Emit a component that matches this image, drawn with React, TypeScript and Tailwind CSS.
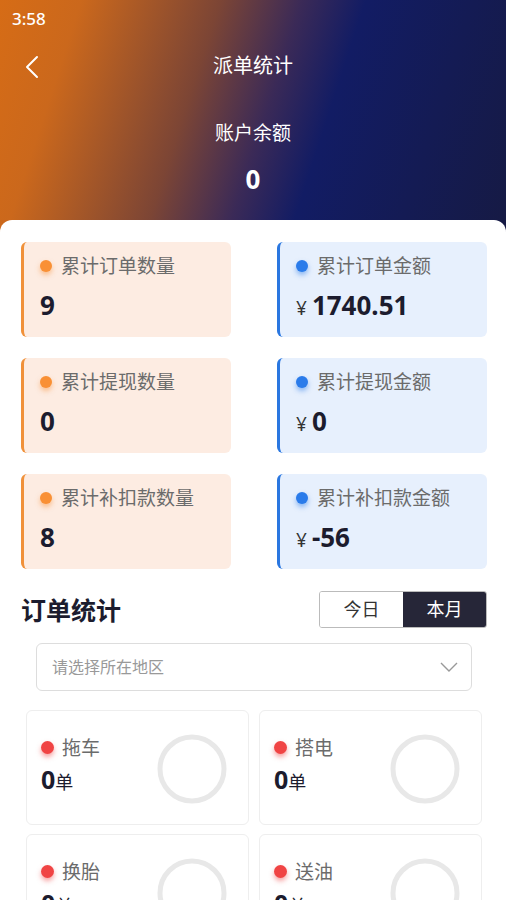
import React from 'react';

const font = { fontFamily: '"Noto Sans", "Noto Sans CJK SC", sans-serif' };

interface StatProps {
  label: string;
  value: string;
  money?: boolean;
}

const StatCard: React.FC<StatProps & { tone: 'orange' | 'blue' }> = ({ label, value, money, tone }) => {
  const orange = tone === 'orange';
  return (
    <div
      className={`h-[95px] rounded-md border-l-[3px] pl-[16px] pt-[12px] ${
        orange ? 'border-[#f0913a] bg-[#fdece2]' : 'border-[#2a77e0] bg-[#e7f0fd]'
      }`}
    >
      <div className="flex items-center gap-[9px]">
        <span
          className={`h-[12px] w-[12px] rounded-full ${
            orange ? 'bg-[#f99035] shadow-[0_3px_5px_rgba(249,144,53,0.5)]' : 'bg-[#2a7bea] shadow-[0_3px_5px_rgba(42,123,234,0.5)]'
          }`}
        />
        <span className="text-[19px] leading-[24px] text-[#6b6b6b]">{label}</span>
      </div>
      <div className="mt-[13px] flex items-baseline text-[#1c1c2e]">
        {money && <span className="mr-[5px] text-[19px] text-[#333]">¥</span>}
        <span className="text-[26px] font-bold leading-[28px]">{value}</span>
      </div>
    </div>
  );
};

const OrderCard: React.FC<{ label: string }> = ({ label }) => (
  <div className="flex h-[115px] items-center justify-between rounded-md border border-[#eeeeee] bg-white pl-[14px] pr-[20px]">
    <div className="-mt-[4px]">
      <div className="flex items-center gap-[8px]">
        <span className="h-[13px] w-[13px] rounded-full bg-[#f04444] shadow-[0_3px_5px_rgba(240,68,68,0.5)]" />
        <span className="text-[19px] leading-[24px] text-[#6b6b6b]">{label}</span>
      </div>
      <div className="mt-[5px] flex items-baseline text-[#1c1c2e]">
        <span className="text-[25px] font-bold leading-[28px]">0</span>
        <span className="text-[18px]">单</span>
      </div>
    </div>
    <svg width="72" height="72" viewBox="0 0 72 72" className="mt-[2px]">
      <circle cx="36" cy="36" r="32" fill="none" stroke="#e8e8e8" strokeWidth="5" />
    </svg>
  </div>
);

export default function App() {
  const stats: [StatProps, StatProps][] = [
    [
      { label: '累计订单数量', value: '9' },
      { label: '累计订单金额', value: '1740.51', money: true },
    ],
    [
      { label: '累计提现数量', value: '0' },
      { label: '累计提现金额', value: '0', money: true },
    ],
    [
      { label: '累计补扣款数量', value: '8' },
      { label: '累计补扣款金额', value: '-56', money: true },
    ],
  ];

  return (
    <div className="h-[900px] w-[506px] overflow-hidden bg-white" style={font}>
      {/* Header */}
      <div className="h-[232px] bg-[linear-gradient(108deg,#d66c16_0%,#cb681c_14%,#7c4535_38%,#3b2a57_52%,#121c64_63%,#161a44_100%)] text-white">
        <div className="px-[12px] pt-[8px] text-[17px] font-medium leading-[22px]">3:58</div>
        <div className="relative mt-[14px] flex h-[44px] items-center justify-center">
          <svg className="absolute left-[24px] top-[11px]" width="16" height="24" viewBox="0 0 16 24">
            <path d="M13 2 L3 12 L13 22" fill="none" stroke="white" strokeWidth="2" strokeLinecap="round" strokeLinejoin="round" />
          </svg>
          <span className="text-[20px] leading-[28px]">派单统计</span>
        </div>
        <div className="mt-[33px] text-center text-[19px] leading-[24px]">账户余额</div>
        <div className="mt-[20px] text-center text-[26px] font-bold leading-[28px]">0</div>
      </div>

      {/* Body */}
      <div className="relative -mt-[12px] rounded-t-[12px] bg-white pl-[21px] pr-[19px] pt-[22px]">
        <div className="flex flex-col gap-[21px]">
          {stats.map(([a, b]) => (
            <div key={a.label} className="grid grid-cols-2 gap-[46px]">
              <StatCard {...a} tone="orange" />
              <StatCard {...b} tone="blue" />
            </div>
          ))}
        </div>

        <div className="mt-[22px] flex items-center justify-between">
          <span className="text-[25px] font-bold leading-[30px] text-[#1c1c2e]">订单统计</span>
          <div className="flex h-[37px] w-[168px] overflow-hidden rounded-[3px] border border-[#bbbbbb] text-[18px]">
            <div className="flex flex-1 items-center justify-center bg-white text-[#333]">今日</div>
            <div className="flex flex-1 items-center justify-center bg-[#262638] text-white">本月</div>
          </div>
        </div>

        <div className="mx-[15px] mt-[15px] flex h-[48px] items-center justify-between rounded-md border border-[#dddddd] pl-[15px] pr-[13px]">
          <span className="text-[16px] text-[#999999]">请选择所在地区</span>
          <svg width="18" height="10" viewBox="0 0 18 10">
            <path d="M1 1 L9 9 L17 1" fill="none" stroke="#999" strokeWidth="1.4" />
          </svg>
        </div>

        <div className="ml-[5px] mr-[5px] mt-[19px] grid grid-cols-2 gap-x-[10px] gap-y-[9px]">
          {['拖车', '搭电', '换胎', '送油'].map((t) => (
            <OrderCard key={t} label={t} />
          ))}
        </div>
      </div>
    </div>
  );
}
